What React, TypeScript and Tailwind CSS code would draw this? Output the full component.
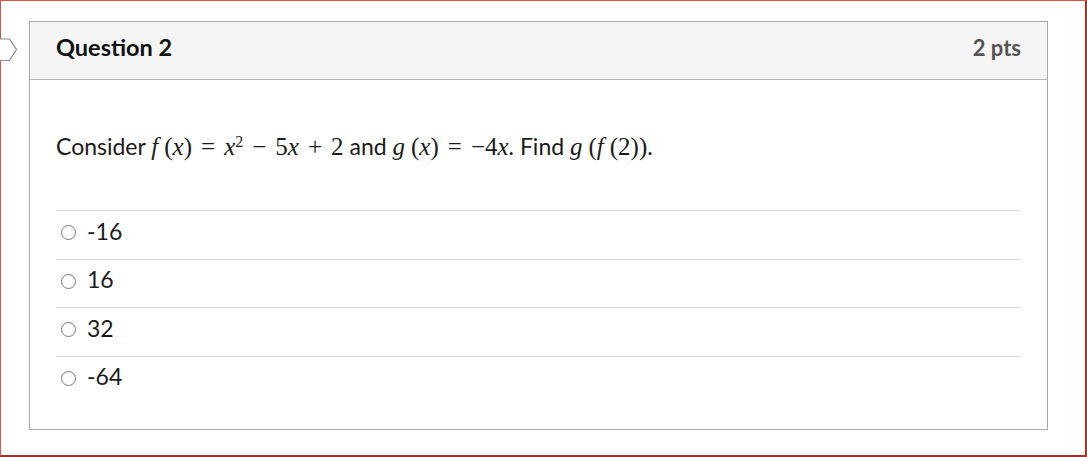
const answers = ["-16", "16", "32", "-64"];

function Mi({ children }: { children: React.ReactNode }) {
  return <span className="italic">{children}</span>;
}

function Op({ children }: { children: React.ReactNode }) {
  return <span className="mx-[9px]">{children}</span>;
}

function Sp() {
  return <span className="inline-block w-[6px]" />;
}

export default function App() {
  return (
    <div className="w-[1087px] h-[457px] bg-white border-t border-l border-[#d9534f] border-r-2 border-b-2 border-r-[#a8312c] border-b-[#a8312c] font-['Lato','Noto_Sans',sans-serif] text-[#1b1b1b]">
      <div className="flex pt-[20px]">
        <div className="w-[28px] pt-[17px]">
          <svg width="18" height="24" viewBox="0 0 18 24" className="-ml-[1px]">
            <path d="M0 1 H9.5 L16.5 11.5 L9.5 22.5 H0" fill="white" stroke="#8a8a8a" strokeWidth="1.2" />
          </svg>
        </div>
        <div className="w-[1019px] h-[409px] border border-[#a9a9a9] flex flex-col">
          <div className="h-[58px] bg-[#f5f5f5] border-b border-[#b5b5b5] flex items-center justify-between px-[26px]">
            <div className="text-[23.5px] font-bold text-[#111] leading-none -mt-[5px]">Question 2</div>
            <div className="text-[22px] font-bold text-[#555] leading-none -mt-[5px]">2 pts</div>
          </div>
          <div className="px-[26px] pt-[52px]">
            <div className="text-[23px] leading-[28px] whitespace-nowrap">
              Consider{" "}
              <span className="font-['Liberation_Serif','DejaVu_Serif',serif] text-[25px]">
                <Mi>f</Mi><Sp />(<Mi>x</Mi>)<Op>=</Op>
                <Mi>x</Mi><sup className="text-[16px] not-italic">2</sup>
                <Op>−</Op>5<Mi>x</Mi>
                <Op>+</Op>2
              </span>{" "}
              and{" "}
              <span className="font-['Liberation_Serif','DejaVu_Serif',serif] text-[25px]">
                <Mi>g</Mi><Sp />(<Mi>x</Mi>)<Op>=</Op>−4<Mi>x</Mi>
              </span>
              . Find{" "}
              <span className="font-['Liberation_Serif','DejaVu_Serif',serif] text-[25px]">
                <Mi>g</Mi><Sp />(<Mi>f</Mi><Sp />(2))
              </span>
              .
            </div>
            <div className="mt-[49px]">
              {answers.map((a) => (
                <div key={a} className="h-[48.5px] border-t border-[#dcdcdc] flex items-center pb-[6px]">
                  <div className="ml-[5px] w-[15px] h-[15px] rounded-full border border-[#7a7a7a] bg-white mt-[2px]" />
                  <span className="ml-[11px] text-[23px] text-[#1b1b1b] -mt-[2px]">{a}</span>
                </div>
              ))}
            </div>
          </div>
        </div>
      </div>
    </div>
  );
}
